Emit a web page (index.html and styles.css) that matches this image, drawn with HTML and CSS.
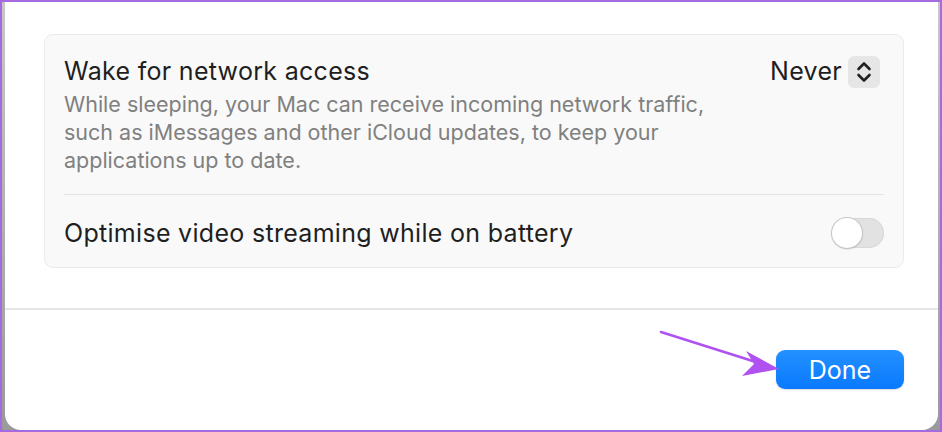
FILE: index.html
```html
<!DOCTYPE html>
<html>
<head>
<meta charset="utf-8">
<link rel="stylesheet" href="styles.css">
</head>
<body>
<div class="frame">
  <div class="window">
    <div class="content">
      <div class="card">
        <div class="row row-top">
          <div class="text">
            <div class="title">Wake for network access</div>
            <div class="desc">While sleeping, your Mac can receive incoming network traffic, such as iMessages and other iCloud updates, to keep your applications up to date.</div>
          </div>
          <div class="popup">
            <span class="popup-label">Never</span>
            <span class="stepper">
              <svg width="20" height="26" viewBox="0 0 20 26"><path d="M4.5 10 L10 4.5 L15.5 10" fill="none" stroke="#222" stroke-width="2.6" stroke-linecap="round" stroke-linejoin="round"/><path d="M4.5 16 L10 21.5 L15.5 16" fill="none" stroke="#222" stroke-width="2.6" stroke-linecap="round" stroke-linejoin="round"/></svg>
            </span>
          </div>
        </div>
        <div class="divider"></div>
        <div class="row row-bottom">
          <div class="title">Optimise video streaming while on battery</div>
          <div class="toggle"><div class="knob"></div></div>
        </div>
      </div>
    </div>
    <div class="footer">
      <button class="done">Done</button>
    </div>
    <svg class="arrow" width="140" height="60" viewBox="0 0 140 60">
      <path d="M2 3 L100 34" stroke="#b052f2" stroke-width="2.6" stroke-linecap="round"/>
      <path d="M120 40 L87 22 L95 35 L83 47 Z" fill="#b052f2"/>
    </svg>
  </div>
</div>
</body>
</html>
```
FILE: styles.css
```css
* { box-sizing: border-box; }
html, body { margin: 0; padding: 0; }
body {
  width: 942px;
  height: 432px;
  overflow: hidden;
  font-family: Inter, "Helvetica Neue", "Liberation Sans", sans-serif;
}
.frame {
  width: 942px;
  height: 432px;
  border: 2px solid #a46ae0;
  background: linear-gradient(#c8c8c8, #9a9a9a);
  padding: 0 2px 0 3px;
}
.window {
  position: relative;
  height: 100%;
  background: #fff;
  border-radius: 0 0 16px 16px;
  display: flex;
  flex-direction: column;
}
.content {
  height: 308px;
  padding: 32px 34px 0 39px;
  border-bottom: 2px solid #e6e6e6;
}
.card {
  background: #f9f9f9;
  border: 1px solid #ebebeb;
  border-radius: 9px;
  padding: 0 19px;
  height: 234px;
}
.row {
  display: flex;
  justify-content: space-between;
}
.row-top {
  padding-top: 20px;
  height: 159px;
}
.title {
  font-size: 25px;
  color: #1f1f1f;
  line-height: 32px;
  letter-spacing: 0.3px;
}
.desc {
  font-size: 21.5px;
  color: #808080;
  line-height: 28px;
  width: 680px;
  margin-top: 3px;
}
.popup {
  display: flex;
  align-items: flex-start;
  gap: 6px;
  margin-right: 4px;
}
.popup-label {
  font-size: 25px;
  color: #1f1f1f;
  line-height: 32px;
  letter-spacing: 0.3px;
}
.stepper {
  width: 32px;
  height: 32px;
  margin-top: 1px;
  background: #e6e6e6;
  border-radius: 6px;
  display: flex;
  align-items: center;
  justify-content: center;
}
.divider {
  height: 1px;
  background: #e4e4e4;
}
.row-bottom {
  align-items: center;
  height: 76px;
  padding-top: 0;
}
.toggle {
  width: 52px;
  height: 30px;
  border-radius: 15px;
  background: #e2e2e2;
  box-shadow: inset 0 0 0 1px #d8d8d8;
  position: relative;
}
.knob {
  position: absolute;
  left: 0;
  top: 0;
  width: 30px;
  height: 30px;
  border-radius: 50%;
  background: #fff;
  box-shadow: 0 0 0 1px #c6c6c6, 0 1px 2px rgba(0,0,0,0.25);
}
.footer {
  flex: 1;
  display: flex;
  justify-content: flex-end;
  align-items: flex-start;
  padding: 40px 34px 0 0;
}
.done {
  width: 128px;
  height: 39px;
  border: none;
  border-radius: 9px;
  background: linear-gradient(#2391ff, #0a79fe);
  color: #fff;
  font-family: inherit;
  font-size: 25px;
  padding: 0;
  box-shadow: 0 1px 2px rgba(0,0,0,0.15);
}
.arrow {
  position: absolute;
  left: 654px;
  top: 327px;
}
```
